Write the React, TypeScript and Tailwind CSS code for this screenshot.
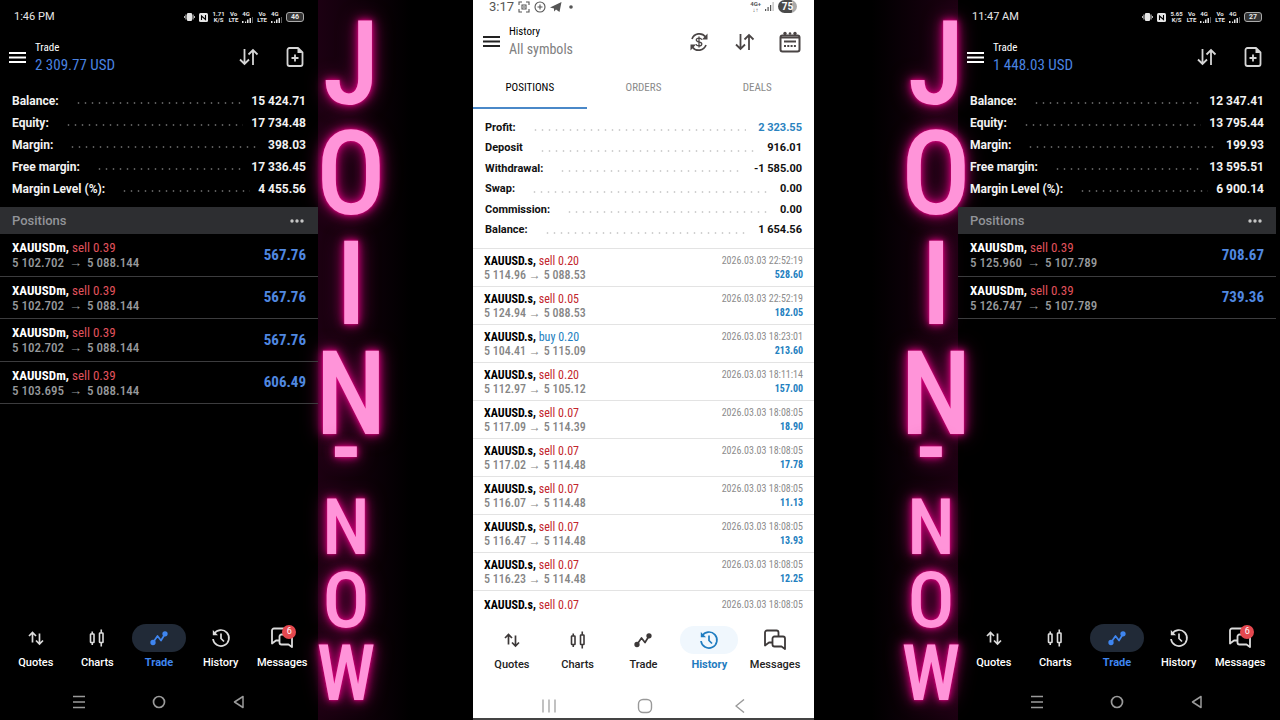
import type { ReactNode } from "react";

const CONDENSED = "font-['Roboto_Condensed','Liberation_Sans_Narrow','Roboto',sans-serif]";

type Pair = { label: string; value: string; blue?: boolean };
type Position = { symbol: string; side: "sell" | "buy"; lots: string; from: string; to: string; profit: string; time?: string };
type Theme = "dark" | "light";

const leftSummary: Pair[] = [
  { label: "Balance:", value: "15 424.71" },
  { label: "Equity:", value: "17 734.48" },
  { label: "Margin:", value: "398.03" },
  { label: "Free margin:", value: "17 336.45" },
  { label: "Margin Level (%):", value: "4 455.56" },
];

const rightSummary: Pair[] = [
  { label: "Balance:", value: "12 347.41" },
  { label: "Equity:", value: "13 795.44" },
  { label: "Margin:", value: "199.93" },
  { label: "Free margin:", value: "13 595.51" },
  { label: "Margin Level (%):", value: "6 900.14" },
];

const historySummary: Pair[] = [
  { label: "Profit:", value: "2 323.55", blue: true },
  { label: "Deposit", value: "916.01" },
  { label: "Withdrawal:", value: "-1 585.00" },
  { label: "Swap:", value: "0.00" },
  { label: "Commission:", value: "0.00" },
  { label: "Balance:", value: "1 654.56" },
];

const sell = (from: string, to: string, profit: string): Position => ({ symbol: "XAUUSDm", side: "sell", lots: "0.39", from, to, profit });

const leftPositions = [
  sell("5 102.702", "5 088.144", "567.76"),
  sell("5 102.702", "5 088.144", "567.76"),
  sell("5 102.702", "5 088.144", "567.76"),
  sell("5 103.695", "5 088.144", "606.49"),
];

const rightPositions = [sell("5 125.960", "5 107.789", "708.67"), sell("5 126.747", "5 107.789", "739.36")];

const deal = (side: "sell" | "buy", lots: string, from: string, to: string, profit: string, time: string): Position => ({
  symbol: "XAUUSD.s", side, lots, from, to, profit, time: `2026.03.03 ${time}`,
});

const historyDeals = [
  deal("sell", "0.20", "5 114.96", "5 088.53", "528.60", "22:52:19"),
  deal("sell", "0.05", "5 124.94", "5 088.53", "182.05", "22:52:19"),
  deal("buy", "0.20", "5 104.41", "5 115.09", "213.60", "18:23:01"),
  deal("sell", "0.20", "5 112.97", "5 105.12", "157.00", "18:11:14"),
  deal("sell", "0.07", "5 117.09", "5 114.39", "18.90", "18:08:05"),
  deal("sell", "0.07", "5 117.02", "5 114.48", "17.78", "18:08:05"),
  deal("sell", "0.07", "5 116.07", "5 114.48", "11.13", "18:08:05"),
  deal("sell", "0.07", "5 116.47", "5 114.48", "13.93", "18:08:05"),
  deal("sell", "0.07", "5 116.23", "5 114.48", "12.25", "18:08:05"),
];

/* ---------- icons ---------- */

function Stroke({ w, h, sw = 1.7, children }: { w: number; h: number; sw?: number; children: ReactNode }) {
  return (
    <svg width={w} height={h} viewBox={`0 0 ${w} ${h}`} fill="none" stroke="currentColor" strokeWidth={sw} aria-hidden="true">
      {children}
    </svg>
  );
}

const MenuIcon = () => (
  <Stroke w={17} h={13} sw={2}><path d="M0 2h17M0 6.5h17M0 11h17" /></Stroke>
);
const SortIcon = () => (
  <Stroke w={20} h={18} sw={1.8}><path d="M5.5 1v15M1 11.5l4.5 4.5 4.5-4.5M14 17V2M9.5 6.5L14 2l4.5 4.5" /></Stroke>
);
const NewOrderIcon = () => (
  <Stroke w={18} h={20} sw={1.8}>
    <path d="M12 1H3.5A2 2 0 0 0 1.5 3v14a2 2 0 0 0 2 2h11a2 2 0 0 0 2-2V5.5z" strokeLinejoin="round" />
    <path d="M11.5 1v5h5z" fill="currentColor" stroke="none" />
    <path d="M9 7.5v7M5.5 11h7" />
  </Stroke>
);
const QuotesIcon = () => (
  <Stroke w={16} h={16}><path d="M4.5 12.5V2.5M1 6l3.5-3.5L8 6M11.5 3.5v10M8 10.5l3.5 3.5 3.5-3.5" /></Stroke>
);
const ChartsIcon = () => (
  <Stroke w={16} h={18} sw={1.6}>
    <rect x="1.5" y="5" width="3.5" height="8.5" rx="0.5" />
    <path d="M3.25 2.5V5M3.25 13.5V16" />
    <rect x="10.5" y="4" width="3.5" height="9.5" rx="0.5" />
    <path d="M12.25 0.5V4M12.25 13.5V17.5" />
  </Stroke>
);
const TradeIcon = () => (
  <Stroke w={20} h={16} sw={1.7}>
    <path d="M4 12.5L8.5 6l3.5 4.5L16 4" strokeLinejoin="round" />
    <circle cx="4" cy="12.5" r="1.8" fill="currentColor" />
    <circle cx="16" cy="3.8" r="1.8" fill="currentColor" />
  </Stroke>
);
const HistoryIcon = () => (
  <Stroke w={20} h={20} sw={1.7}>
    <path d="M3 6a8 8 0 1 1-1 5" />
    <path d="M1.8 2v5.2h5.2z" fill="currentColor" stroke="none" />
    <path d="M10 5.5V10.5l3 3" />
  </Stroke>
);
const MessagesIcon = () => (
  <Stroke w={24} h={22} sw={1.8}>
    <path d="M9.5 13.5H6L2 16.5V3.5a2 2 0 0 1 2-2h9.5a2 2 0 0 1 2 2V7" strokeLinejoin="round" />
    <path d="M11.5 7.5H20a2 2 0 0 1 2 2v10.500l-3.5-2.5H11.5a2 2 0 0 1-2-2V9.500a2 2 0 0 1 2-2z" strokeLinejoin="round" />
  </Stroke>
);
const CurrencyIcon = () => (
  <Stroke w={20} h={20} sw={1.7}>
    <path d="M3 7a7.8 7.8 0 0 1 13.5-2.2M17 13A7.8 7.8 0 0 1 3.5 15.2" />
    <path d="M18.5 1.5v6h-5.5zM1.5 18.5v-6H7z" fill="currentColor" stroke="none" />
    <path d="M12.8 7.7C12.3 6.6 11.3 6.2 10 6.2c-1.6 0-2.7.7-2.7 1.9 0 2.7 5.5 1.1 5.5 3.9 0 1.2-1.2 1.9-2.8 1.9-1.5 0-2.6-.6-3-1.7M10 4.5v11" strokeWidth="1.3" />
  </Stroke>
);
const CalendarIcon = () => (
  <Stroke w={22} h={22} sw={2}>
    <rect x="1.5" y="4.5" width="19" height="16" rx="2" />
    <path d="M1.5 6.5h19" />
    <path d="M5 10.5h12" />
    <path d="M5 15h12" strokeDasharray="2 1.3" />
    <circle cx="6" cy="2.5" r="1.7" fill="currentColor" stroke="none" />
    <circle cx="11" cy="2.5" r="1.3" fill="currentColor" stroke="none" />
    <circle cx="16" cy="2.5" r="1.7" fill="currentColor" stroke="none" />
  </Stroke>
);
const SignalIcon = () => (
  <svg width="11" height="6" viewBox="0 0 11 6" fill="currentColor" aria-hidden="true">
    <path d="M0 4h1.5v2H0zM3 4.5h1.2V6H3zM5 2.5h1.5V6H5zM7.5 1H9v5H7.5z" />
    <path d="M10 0h.8v6H10z" opacity=".5" />
  </svg>
);

/* ---------- shared parts ---------- */

function Summary({ rows, theme }: { rows: Pair[]; theme: Theme }) {
  const dark = theme === "dark";
  return (
    <dl className={dark ? "px-3 text-[12px] font-bold text-[#f2f2f2]" : "px-3 text-[11px] font-bold text-[#111]"}>
      {rows.map((r) => (
        <div key={r.label} className={dark ? "flex h-[22px] items-center" : "flex h-5 items-center even:h-[21px]"}>
          <dt>{r.label}</dt>
          <span
            className={
              dark
                ? "ml-4 mr-2 mt-1 h-1 flex-1 bg-[radial-gradient(circle,#5a5a5a_0.8px,transparent_1.2px)] bg-[length:7px_4px]"
                : "ml-4 mr-3 mt-1 h-1 flex-1 bg-[radial-gradient(circle,#d0d0d0_0.8px,transparent_1.2px)] bg-[length:7px_4px]"
            }
          />
          <dd className={r.blue ? "text-[#2b83c0]" : ""}>{r.value}</dd>
        </div>
      ))}
    </dl>
  );
}

const tabs = [
  { name: "Quotes", Icon: QuotesIcon },
  { name: "Charts", Icon: ChartsIcon },
  { name: "Trade", Icon: TradeIcon },
  { name: "History", Icon: HistoryIcon },
  { name: "Messages", Icon: MessagesIcon },
];

function TabBar({ theme, active }: { theme: Theme; active: string }) {
  const dark = theme === "dark";
  return (
    <nav className={dark ? "grid grid-cols-5 px-[5px] text-[#dcdcdc]" : "grid grid-cols-5 px-[6px] text-[#3c3838]"}>
      {tabs.map(({ name, Icon }) => {
        const on = name === active;
        const tone = on ? (dark ? "text-[#3f86f0]" : "text-[#1f7cc0]") : "";
        const pill = on ? (dark ? "w-[54px] bg-[#212a37]" : "w-[58px] bg-[#f0f7fd]") : "w-[54px]";
        return (
          <button key={name} type="button" className={`flex min-w-0 flex-col items-center gap-1 ${tone}`}>
            <span className={`relative flex h-7 items-center justify-center rounded-full ${pill}`}>
              <Icon />
              {dark && name === "Messages" && (
                <span className="absolute right-[13px] top-px flex h-[14px] w-[14px] items-center justify-center rounded-full bg-[#e5484f] text-[9px] text-white">6</span>
              )}
            </span>
            <span className={`text-[11px] leading-[14px] ${on ? "font-bold" : "font-medium"} ${on ? "" : dark ? "text-white" : "text-[#222]"}`}>{name}</span>
          </button>
        );
      })}
    </nav>
  );
}

function Instrument({ p, theme }: { p: Position; theme: Theme }) {
  const red = theme === "dark" ? "text-[#e0525c]" : "text-[#c3262c]";
  return (
    <>
      <span className={theme === "dark" ? "font-bold text-white" : "font-bold text-black"}>{p.symbol},</span>{" "}
      <span className={p.side === "sell" ? red : "text-[#2380c0]"}>{p.side} {p.lots}</span>
    </>
  );
}

/* ---------- phones ---------- */

function VoLte() {
  return <span className="text-center text-[6px] font-bold leading-[6px]">Vo<br />LTE</span>;
}

function Cell() {
  return <span className="flex flex-col text-[6px] font-bold leading-[6px]">4G<SignalIcon /></span>;
}

function TradePhone(props: { time: string; speed: string; battery: string; profit: string; summary: Pair[]; positions: Position[] }) {
  return (
    <section className="z-20 flex min-w-0 flex-col whitespace-nowrap text-white">
      <div className="flex h-[34px] items-center justify-between px-[14px] text-[#e6e6e6]">
        <span className="text-[11px]">{props.time}</span>
        <span className="flex items-center gap-1">
          <svg width="11" height="8" viewBox="0 0 11 8" fill="currentColor" aria-hidden="true"><rect x="3" width="5" height="8" rx="1" /><path d="M1.5 1.5h1v5h-1zM8.5 1.5h1v5h-1zM0 3h.8v2H0zM10.2 3h.8v2h-.8z" /></svg>
          <svg width="9" height="9" viewBox="0 0 9 9" aria-hidden="true"><rect width="9" height="9" rx="1.5" fill="currentColor" /><path d="M2.5 7V3l4 3.5V2" fill="none" stroke="#000" strokeWidth="1.1" /></svg>
          <span className="ml-px text-center text-[6px] font-bold leading-[6px]">{props.speed}<br />K/S</span>
          <VoLte /><Cell /><VoLte /><Cell />
          <span className="flex h-[10px] w-[18px] items-center justify-center rounded-[3px] border border-[#aaa] bg-[#333] text-[7px] font-bold leading-none">{props.battery}</span>
        </span>
      </div>
      <header className="flex h-[46px] items-center pl-[9px] pr-[14px]">
        <button type="button" aria-label="Menu"><MenuIcon /></button>
        <div className={`ml-[9px] flex-1 ${CONDENSED}`}>
          <h2 className="text-[11px] leading-4">Trade</h2>
          <p className="text-[15px] leading-[19px] text-[#4a83e0]">{props.profit}</p>
        </div>
        <button type="button" aria-label="Sort" className="text-[#d6d6d6]"><SortIcon /></button>
        <button type="button" aria-label="New order" className="ml-[27px] text-[#d6d6d6]"><NewOrderIcon /></button>
      </header>
      <div className="pb-[7px] pt-[10px]"><Summary rows={props.summary} theme="dark" /></div>
      <div className="flex h-[27px] items-center justify-between bg-[#2d2e31] pl-3 pr-[14px] text-[13px] font-medium text-[#929499]">
        <h3>Positions</h3>
        <button type="button" aria-label="More">
          <svg width="14" height="4" viewBox="0 0 14 4" fill="#c5c5c5" aria-hidden="true"><circle cx="2" cy="2" r="1.7" /><circle cx="7" cy="2" r="1.7" /><circle cx="12" cy="2" r="1.7" /></svg>
        </button>
      </div>
      <ul className={CONDENSED}>
        {props.positions.map((p, i) => (
          <li key={i} className="flex h-[43px] items-center justify-between border-b border-[#3c3c3e] px-3 even:h-[42px]">
            <div className="text-[13px] leading-[15px]">
              <p><Instrument p={p} theme="dark" /></p>
              <p className="font-medium text-[#97999c]">{p.from} <span className="mx-0.5">→</span> {p.to}</p>
            </div>
            <span className="text-[15px] font-bold text-[#5088e0]">{p.profit}</span>
          </li>
        ))}
      </ul>
      <div className="flex-1" />
      <TabBar theme="dark" active="Trade" />
      <div className="flex h-[50px] items-center justify-around px-10 pt-[14px] text-[#9a9a9a]">
        <button type="button" aria-label="Recent apps"><Stroke w={12} h={14} sw={1.3}><path d="M0 1.5h12M0 7h12M0 12.5h12" /></Stroke></button>
        <button type="button" aria-label="Home"><Stroke w={14} h={14}><circle cx="7" cy="7" r="5.5" /></Stroke></button>
        <button type="button" aria-label="Back"><Stroke w={12} h={14} sw={1.5}><path d="M10 1.5v11L1.5 7z" strokeLinejoin="round" /></Stroke></button>
      </div>
    </section>
  );
}

function HistoryPhone() {
  return (
    <section className="z-20 flex min-w-0 flex-col whitespace-nowrap border-b-2 border-[#444] bg-white text-black">
      <div className="flex h-[15px] items-start justify-between pl-4 pr-[17px] text-[#555]">
        <span className="flex items-center gap-1">
          <span className="text-[13px] leading-[13px]">3:17</span>
          <Stroke w={12} h={12} sw={1.1}><path d="M1 4V1h3M8 1h3v3M11 8v3H8M4 11H1V8M4 4h4v4H4zM5 6h2" /></Stroke>
          <Stroke w={12} h={12} sw={1.1}><circle cx="6" cy="6" r="5" /><path d="M6 3.5v5M3.5 6h5" /></Stroke>
          <svg width="12" height="12" viewBox="0 0 12 12" fill="currentColor" aria-hidden="true"><path d="M0 6.5L11.5 1 9.5 11 6 8.5 4 10.5V7.5z" /></svg>
          <svg width="8" height="12" viewBox="0 0 8 12" fill="currentColor" aria-hidden="true"><circle cx="5" cy="6" r="1.8" /></svg>
        </span>
        <span className="flex items-center gap-1">
          <span className="text-center text-[6px] font-bold leading-[6px]">4G+<br />↓↑</span>
          <svg width="9" height="9" viewBox="0 0 9 9" fill="currentColor" aria-hidden="true"><path d="M0 7h1.2v2H0zM2.5 5h1.2v4H2.5zM5 3h1.2v6H5z" /><path d="M7.5 0h1.2v9H7.5z" opacity=".4" /></svg>
          <span className="flex h-[13px] w-[19px] items-center justify-center rounded-full bg-linear-to-r from-[#4a4a4a] from-75% to-[#aaa] to-75% text-[10px] font-bold leading-none text-white">75</span>
        </span>
      </div>
      <header className="flex h-[53px] items-center pl-[10px] pr-[13px] text-[#4a4545]">
        <button type="button" aria-label="Menu" className="text-[#222]"><MenuIcon /></button>
        <div className={`ml-[9px] flex-1 ${CONDENSED}`}>
          <h2 className="text-[11px] leading-4 text-black">History</h2>
          <p className="text-[14px] leading-[19px] text-[#808080]">All symbols</p>
        </div>
        <button type="button" aria-label="Currency"><CurrencyIcon /></button>
        <button type="button" aria-label="Sort" className="ml-[26px]"><SortIcon /></button>
        <button type="button" aria-label="Period" className="ml-6"><CalendarIcon /></button>
      </header>
      <div role="tablist" className={`grid h-[41px] grid-cols-3 text-[11px] text-[#8a8a8a] ${CONDENSED}`}>
        <button type="button" role="tab" aria-selected="true" className="border-b-2 border-[#4a88c8] pt-0.5 text-black">POSITIONS</button>
        <button type="button" role="tab" aria-selected="false" className="border-b-2 border-transparent pt-0.5">ORDERS</button>
        <button type="button" role="tab" aria-selected="false" className="border-b-2 border-transparent pt-0.5">DEALS</button>
      </div>
      <div className="pb-[7px] pt-[9px]"><Summary rows={historySummary} theme="light" /></div>
      <ul className={CONDENSED}>
        {historyDeals.map((p, i) => (
          <li key={i} className="flex h-[38px] items-center justify-between border-t border-[#e3e3e3] px-[11px]">
            <div className="text-[12px] leading-[14px]">
              <p><Instrument p={p} theme="light" /></p>
              <p className="font-medium text-[#858585]">{p.from} → {p.to}</p>
            </div>
            <div className="text-right text-[10px] leading-[14px]">
              <p className="text-[#8c8c8c]">{p.time}</p>
              <p className="font-bold text-[#2380c0]">{p.profit}</p>
            </div>
          </li>
        ))}
        <li className="flex h-6 items-center justify-between border-t border-[#e3e3e3] px-[11px] pt-1 text-[12px]">
          <p><Instrument p={historyDeals[8]} theme="light" /></p>
          <span className="text-[10px] text-[#8c8c8c]">2026.03.03 18:08:05</span>
        </li>
      </ul>
      <div className="flex-1" />
      <TabBar theme="light" active="History" />
      <div className="flex h-[46px] items-center justify-around px-7 pt-[22px] text-[#999]">
        <button type="button" aria-label="Recent apps"><Stroke w={14} h={14} sw={1.2}><path d="M1 0.5v13M7 0.5v13M13 0.5v13" /></Stroke></button>
        <button type="button" aria-label="Home"><Stroke w={16} h={16} sw={1.4}><rect x="1.5" y="1.5" width="13" height="13" rx="4.5" /></Stroke></button>
        <button type="button" aria-label="Back"><Stroke w={10} h={14} sw={1.4}><path d="M9 0.5L1 7l8 6.5" /></Stroke></button>
      </div>
    </section>
  );
}

/* ---------- neon lettering ---------- */

function Neon({ side }: { side: "left" | "right" }) {
  return (
    <div
      className={
        side === "left"
          ? "flex min-w-0 justify-start bg-linear-to-r from-[#1c0012] to-transparent to-60%"
          : "flex min-w-0 justify-end bg-linear-to-l from-[#1c0012] to-transparent to-60%"
      }
    >
      <div
        className={`${side === "left" ? "" : "-mr-[11px]"} flex w-[66px] flex-col items-center pt-[9px] font-medium text-[#ff94d9] [text-shadow:0_0_2px_#e6007e,0_0_6px_#c80076,0_0_12px_#a80066,0_0_20px_#800050] ${CONDENSED}`}
      >
        {["J", "O", "I", "N"].map((c) => (
          <span key={c} className="h-[110px] text-[116px] leading-[110px]">{c}</span>
        ))}
        <div className="mr-[10px] flex flex-col items-center text-[78px]">
          <span className="h-[42px] text-[92px] font-bold leading-[0px]">-</span>
          {["N", "O", "W"].map((c) => (
            <span key={c} className="h-[73px] leading-[73px]">{c}</span>
          ))}
        </div>
      </div>
    </div>
  );
}

export default function App() {
  return (
    <main className="grid min-h-screen grid-cols-[318fr_155fr_341fr_144fr_318fr_4fr] bg-black font-['Roboto',sans-serif]">
      <TradePhone time="1:46 PM" speed="1.71" battery="46" profit="2 309.77 USD" summary={leftSummary} positions={leftPositions} />
      <Neon side="left" />
      <HistoryPhone />
      <Neon side="right" />
      <TradePhone time="11:47 AM" speed="5.65" battery="27" profit="1 448.03 USD" summary={rightSummary} positions={rightPositions} />
    </main>
  );
}
